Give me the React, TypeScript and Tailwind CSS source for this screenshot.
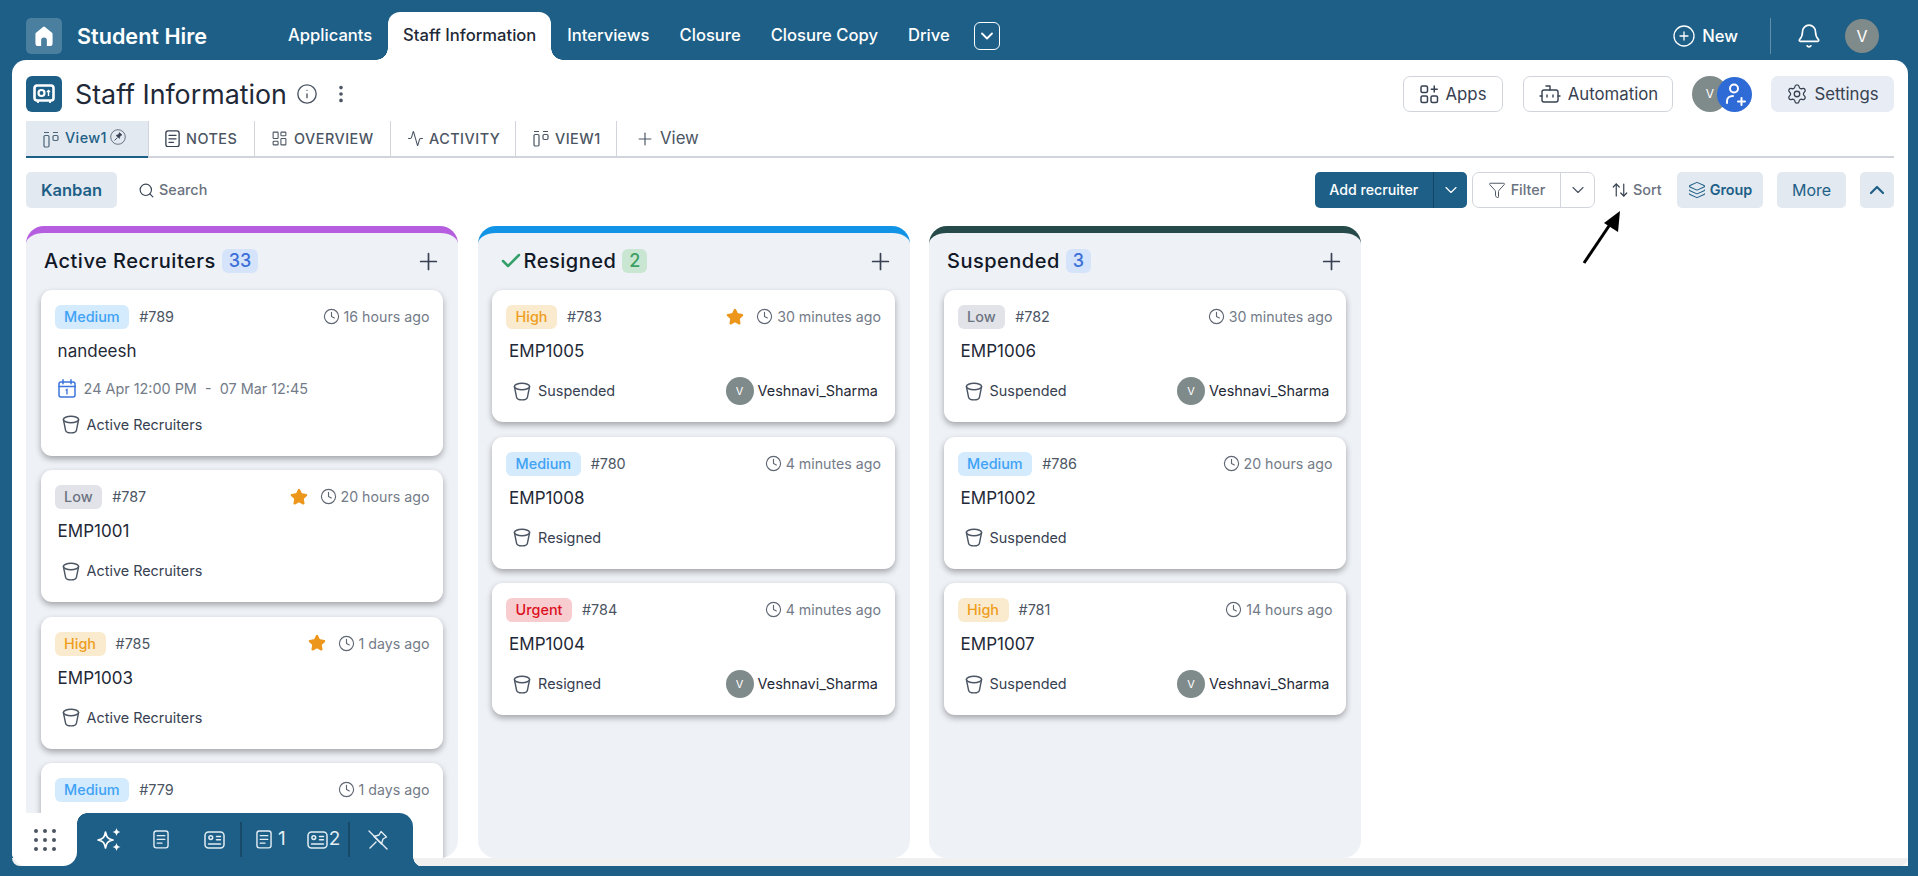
import React from "react";
import {
  Activity,
  ArrowUpDown,
  Bell,
  Bot,
  Check,
  ChevronDown,
  ChevronUp,
  CirclePlus,
  Clock,
  EllipsisVertical,
  Funnel,
  Info,
  Layers,
  LayoutDashboard,
  Plus,
  Search,
  Settings,
  Star,
} from "lucide-react";

type Priority = "Low" | "Medium" | "High" | "Urgent";

type CardData = {
  priority: Priority;
  id: string;
  time: string;
  name?: string;
  stage?: string;
  starred?: boolean;
  owner?: boolean;
  dates?: boolean;
};

const priorityStyles: Record<Priority, string> = {
  Low: "bg-[#e1e3e8] text-[#6b7280]",
  Medium: "bg-[#d4eafd] text-[#3ea2f5]",
  High: "bg-[#faebcf] text-[#ee9d1c]",
  Urgent: "bg-[#f8cdd0] text-[#dc0f1c]",
};

const columns = [
  {
    title: "Active Recruiters",
    count: "33",
    border: "border-[#b55fe0]",
    badge: "bg-[#d6e4fb] text-[#3a6fd8]",
    done: false,
    cards: [
      { priority: "Medium", id: "#789", time: "16 hours ago", name: "nandeesh", stage: "Active Recruiters", dates: true },
      { priority: "Low", id: "#787", time: "20 hours ago", name: "EMP1001", stage: "Active Recruiters", starred: true },
      { priority: "High", id: "#785", time: "1 days ago", name: "EMP1003", stage: "Active Recruiters", starred: true },
      // rest of this card sits behind the dock
      { priority: "Medium", id: "#779", time: "1 days ago" },
    ] as CardData[],
  },
  {
    title: "Resigned",
    count: "2",
    border: "border-[#1193e6]",
    badge: "bg-[#c9e6d2] text-[#3d9f63]",
    done: true,
    cards: [
      { priority: "High", id: "#783", time: "30 minutes ago", name: "EMP1005", stage: "Suspended", starred: true, owner: true },
      { priority: "Medium", id: "#780", time: "4 minutes ago", name: "EMP1008", stage: "Resigned" },
      { priority: "Urgent", id: "#784", time: "4 minutes ago", name: "EMP1004", stage: "Resigned", owner: true },
    ] as CardData[],
  },
  {
    title: "Suspended",
    count: "3",
    border: "border-[#264a4a]",
    badge: "bg-[#d6e4fb] text-[#3a6fd8]",
    done: false,
    cards: [
      { priority: "Low", id: "#782", time: "30 minutes ago", name: "EMP1006", stage: "Suspended", owner: true },
      { priority: "Medium", id: "#786", time: "20 hours ago", name: "EMP1002", stage: "Suspended" },
      { priority: "High", id: "#781", time: "14 hours ago", name: "EMP1007", stage: "Suspended", owner: true },
    ] as CardData[],
  },
];

const BucketIcon = () => (
  <svg width="18" height="19" viewBox="0 0 18 19" fill="none" stroke="#4b5563" strokeWidth="1.4" className="shrink-0">
    <ellipse cx="9" cy="4.5" rx="7.6" ry="3.2" />
    <path d="M1.4 4.5 3.6 15.4C3.900 17.100 5.800 17.900 9 17.900s5.100-.8 5.400-2.500l2.200-10.900" strokeLinecap="round" />
  </svg>
);

const BoardIcon = ({ color }: { color: string }) => (
  <svg width="16" height="18" viewBox="0 0 16 18" fill="none" stroke={color} strokeWidth="1.2" className="shrink-0">
    <path d="M1 1.5h5M10 1.5h5" />
    <rect x="1" y="4.5" width="5" height="11.5" rx="1.2" />
    <rect x="10" y="4.5" width="5" height="5" rx="1.2" />
  </svg>
);

const NoteIcon = ({ size = 18, color = "#374151", sw = 1.5 }: { size?: number; color?: string; sw?: number }) => (
  <svg width={size} height={(size * 20) / 17} viewBox="0 0 17 20" fill="none" stroke={color} strokeWidth={sw} className="shrink-0">
    <rect x="1" y="1" width="15" height="18" rx="2.5" />
    <path d="M4.5 6h8M4.5 10h8M4.5 14h5" strokeLinecap="round" />
  </svg>
);

const ContactCard = () => (
  <svg width="21" height="18" viewBox="0 0 21 18" fill="none" stroke="#e3edf3" strokeWidth="1.5" className="shrink-0">
    <rect x="1" y="1" width="19" height="16" rx="3.5" />
    <circle cx="6.800" cy="6.600" r="1.900" />
    <path d="M4.500 13h12M12.500 5.500h4M12.500 8.800h4" strokeLinecap="round" />
  </svg>
);

const SparkleIcon = () => (
  <svg width="26" height="24" viewBox="0 0 26 24" fill="none" className="shrink-0">
    <path d="M9.500 4C10.500 9 11.500 11 17 12 11.500 13 10.500 15 9.500 20 8.500 15 7.500 13 2 12 7.500 11 8.500 9 9.500 4z" stroke="#ffffff" strokeWidth="1.700" strokeLinejoin="round" />
    <path d="M20.500 0C21 2.500 22 3.500 24.500 4 22 4.500 21 5.500 20.500 8 20 5.500 19 4.500 16.500 4 19 3.500 20 2.500 20.500 0z" fill="#ffffff" />
    <path d="M20.500 15C21 17.500 22 18.500 24.500 19 22 19.500 21 20.500 20.500 23 20 20.500 19 19.500 16.500 19 19 18.500 20 17.500 20.500 15z" fill="#ffffff" />
  </svg>
);

const PinSlashIcon = () => (
  <svg width="20" height="20" viewBox="0 0 20 20" fill="none" stroke="#e3edf3" strokeWidth="1.400" strokeLinejoin="round" strokeLinecap="round" className="shrink-0">
    <path d="M13 1.500 18.500 7 15 9l-1.500 5L6 6.500l5-1.500z" />
    <path d="M2 18l6-6M1 1l18 18" />
  </svg>
);

const CalendarIcon = () => (
  <svg width="18" height="19" viewBox="0 0 18 19" fill="none" stroke="#3b74dc" strokeWidth="1.5" className="shrink-0">
    <rect x="1" y="3" width="16" height="15" rx="2" />
    <path d="M1 7.5h16M5 .8v4M13 .8v4" strokeLinecap="round" />
    <path d="M7.600 11.200 9 10.400v5" strokeWidth="1.300" />
  </svg>
);

const HomeIcon = () => (
  <svg width="20" height="20" viewBox="0 0 20 21" fill="#ffffff">
    <path d="M9 1a1.600 1.600 0 0 1 2 0l7.400 6.200c.4.3.6.8.6 1.300V18a3 3 0 0 1-3 3h-3V15a3 3 0 0 0-6 0v6H4a3 3 0 0 1-3-3V8.500c0-.5.2-1 .6-1.300z" />
  </svg>
);

const SectionLogo = () => (
  <div className="flex h-9 w-9 shrink-0 items-center justify-center rounded-[6px] bg-[#1e5f87]">
    <svg width="22" height="20" viewBox="0 0 22 20" fill="none" stroke="#ffffff">
      <rect x="1.500" y="1.500" width="19" height="15" rx="2.500" strokeWidth="2.600" />
      <circle cx="8.500" cy="9" r="3" strokeWidth="2.200" />
      <path d="M15.500 12V6.500M14 8l1.500-1.500L17 8" strokeWidth="1.400" />
      <path d="M5 17v2M17 17v2" strokeWidth="1.800" />
    </svg>
  </div>
);

const Avatar = ({ className }: { className: string }) => (
  <div className={`flex shrink-0 items-center justify-center rounded-full bg-[#7f8a8a] text-white ${className}`}>V</div>
);

const Card = ({ card }: { card: CardData }) => (
  <div className={`shrink-0 rounded-[11px] bg-white pb-[17px] pt-[15px] shadow-[0_3px_6px_rgba(0,0,0,0.32)] ${card.name ? "" : "h-[132px]"}`}>
    <div className="flex h-6 items-center pl-[14px] pr-[14px]">
      <span className={`flex h-6 items-center rounded-[6px] px-[9.500px] text-[14.400px] font-medium ${priorityStyles[card.priority]}`}>
        {card.priority}
      </span>
      <span className="ml-[10px] text-[14.400px] text-[#4b5563]">{card.id}</span>
      <div className="ml-auto flex items-center text-[14.200px] text-[#737b88]">
        {card.starred && <Star size={18} fill="#ec961c" stroke="#ec961c" className="mr-3" />}
        <Clock size={17} strokeWidth={1.6} className="mr-[4px] text-[#5f6773]" />
        {card.time}
      </div>
    </div>
    {card.name && <div className="mt-[10px] pl-[17px] text-[17px] leading-6 text-[#1f2937]">{card.name}</div>}
    {card.dates && (
      <div className="mt-[13.500px] flex h-6 items-center whitespace-pre pl-[17px] text-[14.400px] text-[#737b88]">
        <CalendarIcon />
        <span className="ml-2">24 Apr 12:00 PM  -  07 Mar 12:45</span>
      </div>
    )}
    {card.stage && (
      <div className={`flex h-7 items-center pl-[21px] pr-[17px] ${card.dates ? "mt-[10px]" : "mt-[14px]"}`}>
        <BucketIcon />
        <span className="ml-[7px] text-[14.400px] text-[#374151]">{card.stage}</span>
        {card.owner && (
          <div className="ml-auto flex items-center">
            <Avatar className="h-7 w-7 text-[11px]" />
            <span className="ml-1 text-[14.400px] text-[#1f2937]">Veshnavi_Sharma</span>
          </div>
        )}
      </div>
    )}
  </div>
);

const Column = ({ column }: { column: (typeof columns)[number] }) => (
  <div className={`flex h-full w-[432px] shrink-0 flex-col overflow-hidden rounded-[18px] border-t-[7px] bg-[#eef1f6] ${column.border}`}>
    <div className="flex h-[57px] shrink-0 items-center pb-[1px] pl-[18px] pr-[16px]">
      {column.done && <Check size={24} stroke="#35a06a" strokeWidth={2.5} className="ml-[3px] mr-[1px]" />}
      <span className="text-xl font-medium tracking-[0.5px] text-[#111827]">{column.title}</span>
      <span className={`ml-[6px] flex h-6 items-center rounded-[6px] px-[7px] text-lg font-medium ${column.badge}`}>{column.count}</span>
      <Plus size={27} strokeWidth={1.5} className="ml-auto text-[#374151]" />
    </div>
    <div className="flex flex-col gap-[14.500px] px-[14.600px]">
      {column.cards.map((card) => (
        <Card key={card.id} card={card} />
      ))}
    </div>
  </div>
);

const TopBar = () => (
  <header className="flex h-[60px] shrink-0 items-center pl-[26px] pr-[39px] pt-3 text-white">
    <div className="flex h-9 w-9 items-center justify-center rounded-[5px] bg-white/20">
      <HomeIcon />
    </div>
    <span className="ml-[15px] w-[211px] text-[21.600px] font-semibold">Student Hire</span>
    <nav className="flex h-full items-end text-[16.600px] font-medium">
      <a className="flex h-12 items-center pb-[1px]">Applicants</a>
      <a className="relative ml-4 flex h-12 w-[163px] items-center justify-center rounded-t-[12px] bg-white pb-[1px] text-[#1f2937]">
        Staff Information
        <span className="absolute bottom-0 left-[-12px] h-3 w-3 bg-[radial-gradient(circle_at_0_0,transparent_11.500px,#ffffff_12px)]" />
        <span className="absolute bottom-0 right-[-12px] h-3 w-3 bg-[radial-gradient(circle_at_100%_0,transparent_11.500px,#ffffff_12px)]" />
      </a>
      <a className="ml-4 flex h-12 items-center pb-[1px]">Interviews</a>
      <a className="ml-[30px] flex h-12 items-center pb-[1px]">Closure</a>
      <a className="ml-[30px] flex h-12 items-center pb-[1px]">Closure Copy</a>
      <a className="ml-[30px] flex h-12 items-center pb-[1px]">Drive</a>
      <div className="mb-[10px] ml-[24px] flex h-7 w-[26px] items-center justify-center rounded-[6px] border border-white">
        <ChevronDown size={20} strokeWidth={2.2} />
      </div>
    </nav>
    <div className="ml-auto flex items-center">
      <CirclePlus size={24} strokeWidth={1.3} />
      <span className="ml-[6.500px] text-[16.600px] font-medium">New</span>
      <div className="ml-[32px] h-9 w-px bg-white/30" />
      <Bell size={26} strokeWidth={1.5} className="ml-[25px]" />
      <Avatar className="ml-[23px] h-[34px] w-[34px] text-base" />
    </div>
  </header>
);

const tabClass = "flex h-full items-center border-r border-[#d1d5db] text-[14.400px] font-medium tracking-[0.5px] text-[#4b5563]";

const ViewTabs = () => (
  <div className="mt-[9px] flex h-[37px] shrink-0 items-stretch border-b-2 border-[#d1d5db]">
    <div className="-mb-[2px] flex w-[123px] items-center border-r border-[#d1d5db] bg-[#e2e9f0] pl-[17px] shadow-[inset_0_-2px_0_#1e5f87]">
      <BoardIcon color="#4b6478" />
      <span className="mb-[3px] ml-[6px] text-[14.400px] font-medium tracking-[0.4px] text-[#1e5f87]">View1</span>
      <svg width="16" height="16" viewBox="0 0 16 16" fill="none" stroke="#374151" className="mb-[6px] ml-[3px]">
        <circle cx="8" cy="8" r="7.300" strokeWidth="0.700" />
        <path d="M9.500 3.500 12 6 10 7 9.500 9.500 6 6.500 8.500 5.500z" fill="#374151" strokeWidth="0.500" />
        <path d="M4.500 11.500 7.500 8.500" strokeWidth="0.900" />
      </svg>
    </div>
    <div className={`${tabClass} w-[106px] pl-[16px]`}>
      <NoteIcon size={15} />
      <span className="ml-[6px]">NOTES</span>
    </div>
    <div className={`${tabClass} w-[136px] pl-[16px]`}>
      <LayoutDashboard size={17} strokeWidth={1.5} />
      <span className="ml-[6px]">OVERVIEW</span>
    </div>
    <div className={`${tabClass} w-[125px] pl-[16px]`}>
      <Activity size={17} strokeWidth={1.5} />
      <span className="ml-[5px]">ACTIVITY</span>
    </div>
    <div className={`${tabClass} w-[101px] pl-[17px]`}>
      <BoardIcon color="#4b5563" />
      <span className="ml-[6px]">VIEW1</span>
    </div>
    <div className="ml-[18px] flex items-center text-[#4b5563]">
      <Plus size={20} strokeWidth={1.4} />
      <span className="ml-[5px] text-[16.800px]">View</span>
    </div>
  </div>
);

const Toolbar = () => (
  <div className="mt-[14px] flex h-9 shrink-0 items-center">
    <div className="flex h-9 w-[91px] items-center justify-center rounded-[5px] bg-[#e2e9f0] text-[16.500px] font-semibold text-[#1e5f87]">Kanban</div>
    <Search size={17} strokeWidth={1.6} className="ml-[21px] text-[#374151]" />
    <span className="ml-[4px] text-[14.400px] font-medium text-[#6b7280]">Search</span>
    <div className="ml-auto flex h-9 items-center">
      <div className="flex h-full w-[152px] items-center rounded-[5px] bg-[#1e5f87] text-[14.200px] font-medium text-white">
        <span className="w-[118.500px] border-r border-[#124565] text-center leading-9">Add recruiter</span>
        <ChevronDown size={20} strokeWidth={1.4} className="ml-[7px]" />
      </div>
      <div className="ml-[5px] flex h-full w-[123px] items-center rounded-[7px] border border-[#d1d5db] text-[14.400px] font-medium text-[#6b7280]">
        <div className="flex h-full w-[88px] items-center justify-center border-r border-[#d1d5db]">
          <Funnel size={18} strokeWidth={1.3} className="text-[#4b5563]" />
          <span className="ml-[5px]">Filter</span>
        </div>
        <ChevronDown size={20} strokeWidth={1.4} className="ml-[7px] text-[#4b5563]" />
      </div>
      <div className="ml-4 flex w-[52px] items-center text-[14.400px] font-medium text-[#6b7280]">
        <ArrowUpDown size={18} strokeWidth={1.6} className="text-[#374151]" />
        <span className="ml-[4px]">Sort</span>
      </div>
      <div className="ml-[14px] flex h-full w-[86px] items-center justify-center rounded-[5px] bg-[#e2e9f0] text-[14.400px] font-semibold text-[#1e5f87]">
        <Layers size={18} strokeWidth={1.4} />
        <span className="ml-[4px]">Group</span>
      </div>
      <div className="ml-[14px] flex h-full w-[69px] items-center justify-center rounded-[5px] bg-[#e2e9f0] text-base text-[#1e5f87]">More</div>
      <div className="ml-[14px] flex h-full w-[34px] items-center justify-center rounded-[5px] bg-[#e2e9f0] text-[#1e5f87]">
        <ChevronUp size={24} strokeWidth={2.2} />
      </div>
    </div>
  </div>
);

const DockBar = () => (
  <div className="absolute bottom-0 left-0 flex h-[53px] items-stretch">
    <div className="relative z-10 flex w-[65px] items-center justify-center rounded-b-[14px] bg-white">
      <div className="grid grid-cols-3 gap-[5px]">
        {Array.from({ length: 9 }).map((_, i) => (
          <span key={i} className="h-[4px] w-[4px] rounded-full bg-[#4b5563]" />
        ))}
      </div>
      <span className="absolute left-[65px] top-0 h-[10px] w-[10px] bg-[radial-gradient(circle_at_100%_100%,transparent_9.500px,#ffffff_10px)]" />
    </div>
    <div className="relative -ml-[14px] flex w-[350px] items-center rounded-tr-[14px] bg-[#1e5f87] pl-[14px] text-[19px] text-[#e3edf3]">
      <div className="ml-[19px]"><SparkleIcon /></div>
      <div className="ml-[31px]"><NoteIcon size={16} color="#e3edf3" /></div>
      <div className="ml-[35px]"><ContactCard /></div>
      <div className="ml-[15px] h-[35px] w-[2px] bg-[#174a69]" />
      <div className="ml-[14px]"><NoteIcon size={16} color="#e3edf3" /></div>
      <span className="ml-[6px]">1</span>
      <div className="ml-[21px]"><ContactCard /></div>
      <span className="ml-[1px]">2</span>
      <div className="ml-[8px] h-[35px] w-[2px] bg-[#174a69]" />
      <div className="ml-[18px]"><PinSlashIcon /></div>
      <span className="absolute bottom-0 right-[-10px] h-[9px] w-[10px] bg-[radial-gradient(circle_at_100%_0,transparent_9.500px,#1e5f87_10px)]" />
    </div>
  </div>
);

const PointerArrow = () => (
  <svg width="44" height="56" viewBox="0 0 44 56" className="absolute left-[1570px] top-[148px]">
    <path d="M2 55 31 12" stroke="#000000" strokeWidth="3" />
    <path d="M38 3 36 24 22 15z" fill="#000000" />
  </svg>
);

export default function App() {
  return (
    <div className="flex h-[876px] w-[1918px] flex-col overflow-hidden bg-[#1e5f87] font-['Inter',sans-serif]">
      <TopBar />
      <main className="relative mb-[10px] ml-[12px] mr-[10px] flex min-h-0 flex-1 flex-col rounded-t-[14px] rounded-bl-[14px] bg-white">
        <div className="flex min-h-0 flex-1 flex-col px-[14px] pt-4">
          <div className="flex h-9 shrink-0 items-center">
            <SectionLogo />
            <h1 className="ml-[13px] mt-[1px] text-[26.800px] font-normal text-[#1f2937]">Staff Information</h1>
            <Info size={22} strokeWidth={1.5} className="ml-[9px] text-[#4b5563]" />
            <EllipsisVertical size={22} strokeWidth={2} className="ml-[12px] text-[#4b5563]" />
            <div className="ml-auto flex items-center">
              <div className="flex h-9 w-[100px] items-center justify-center rounded-[7px] border border-[#d1d5db] text-[16.800px] text-[#374151]">
                <svg width="19" height="19" viewBox="0 0 19 19" fill="none" stroke="#374151" strokeWidth="1.500">
                  <rect x="1" y="1" width="6.500" height="6.500" rx="1.500" />
                  <rect x="1" y="11" width="6.500" height="6.500" rx="1.500" />
                  <rect x="11" y="11" width="6.500" height="6.500" rx="1.500" />
                  <path d="M14.250 .5v7M10.750 4.250h7" />
                </svg>
                <span className="ml-[7px] mt-[2px]">Apps</span>
              </div>
              <div className="ml-5 flex h-9 w-[150px] items-center justify-center rounded-[7px] border border-[#d1d5db] text-[16.800px] text-[#374151]">
                <Bot size={24} strokeWidth={1.4} />
                <span className="ml-[6px] mt-[2px]">Automation</span>
              </div>
              <div className="ml-[19px] flex items-center">
                <Avatar className="h-9 w-9 text-xs" />
                <div className="ml-[-11px] flex h-[35px] w-[35px] items-center justify-center rounded-full bg-[#2f6bd6]">
                  <svg width="22" height="24" viewBox="0 0 22 24" fill="none" stroke="#ffffff" strokeWidth="2" strokeLinecap="round">
                    <circle cx="10" cy="6.500" r="4" />
                    <path d="M3 21v-2c0-3 2.500-5 6-5M14 19.500h7M17.500 16v7" />
                  </svg>
                </div>
              </div>
              <div className="ml-[19px] flex h-9 w-[123px] items-center justify-center rounded-[7px] bg-[#e8ecf4] text-[16.800px] text-[#374151]">
                <Settings size={22} strokeWidth={1.4} />
                <span className="ml-[6px] mt-[2px]">Settings</span>
              </div>
            </div>
          </div>
          <ViewTabs />
          <Toolbar />
          <div className="mt-[18px] flex min-h-0 flex-1 gap-[19.500px]">
            {columns.map((column) => (
              <Column key={column.title} column={column} />
            ))}
          </div>
        </div>
        <div className="h-2 shrink-0 rounded-b-[14px] bg-[#f0f0f0]" />
        <DockBar />
        <PointerArrow />
      </main>
    </div>
  );
}
